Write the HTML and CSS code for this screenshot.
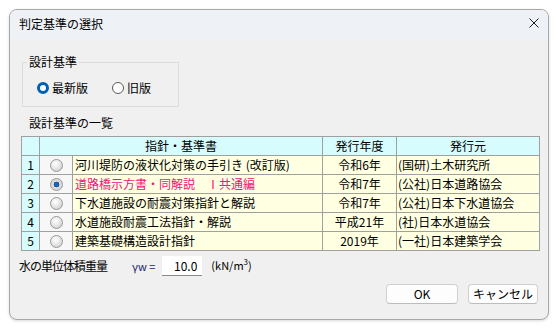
FILE: index.html
```html
<!DOCTYPE html>
<html lang="ja">
<head>
    <meta charset="UTF-8">
    <title>判定基準の選択</title>
    <link rel="stylesheet" href="styles.css">
</head>
<body>
    <div class="window">
        <div class="titlebar">
            <span class="title">判定基準の選択</span>
            <svg class="close" width="10" height="10" viewBox="0 0 10 10">
                <path d="M0.5 0.5 L9.5 9.5 M9.5 0.5 L0.5 9.5" stroke="#1a1a1a" stroke-width="1" fill="none"/>
            </svg>
        </div>
        <div class="content">
            <fieldset class="group">
                <legend>設計基準</legend>
                <div class="radio-row">
                    <label class="opt"><span class="w-radio checked"></span>最新版</label>
                    <label class="opt"><span class="w-radio"></span>旧版</label>
                </div>
            </fieldset>

            <div class="list-label">設計基準の一覧</div>

            <table class="grid">
                <colgroup>
                    <col class="c-no">
                    <col class="c-radio">
                    <col class="c-name">
                    <col class="c-year">
                    <col class="c-pub">
                </colgroup>
                <thead>
                    <tr>
                        <th></th>
                        <th colspan="2">指針・基準書</th>
                        <th>発行年度</th>
                        <th>発行元</th>
                    </tr>
                </thead>
                <tbody>
                    <tr>
                        <td class="no">1</td>
                        <td class="sel"><span class="c-rb"></span></td>
                        <td class="name">河川堤防の液状化対策の手引き (改訂版)</td>
                        <td class="year">令和6年</td>
                        <td class="pub">(国研)土木研究所</td>
                    </tr>
                    <tr class="active">
                        <td class="no">2</td>
                        <td class="sel"><span class="c-rb on"></span></td>
                        <td class="name">道路橋示方書・同解説　Ⅰ共通編</td>
                        <td class="year">令和7年</td>
                        <td class="pub">(公社)日本道路協会</td>
                    </tr>
                    <tr>
                        <td class="no">3</td>
                        <td class="sel"><span class="c-rb"></span></td>
                        <td class="name">下水道施設の耐震対策指針と解説</td>
                        <td class="year">令和7年</td>
                        <td class="pub">(公社)日本下水道協会</td>
                    </tr>
                    <tr>
                        <td class="no">4</td>
                        <td class="sel"><span class="c-rb"></span></td>
                        <td class="name">水道施設耐震工法指針・解説</td>
                        <td class="year">平成21年</td>
                        <td class="pub">(社)日本水道協会</td>
                    </tr>
                    <tr>
                        <td class="no">5</td>
                        <td class="sel"><span class="c-rb"></span></td>
                        <td class="name">建築基礎構造設計指針</td>
                        <td class="year">2019年</td>
                        <td class="pub">(一社)日本建築学会</td>
                    </tr>
                </tbody>
            </table>

            <div class="weight-row">
                <span class="weight-label">水の単位体積重量</span>
                <span class="gamma">γw =</span>
                <input class="num" type="text" value="10.0">
                <span class="unit">(kN/m<sup>3</sup>)</span>
            </div>

            <div class="buttons">
                <button class="btn">OK</button>
                <button class="btn">キャンセル</button>
            </div>
        </div>
    </div>
</body>
</html>
```

FILE: styles.css
```css
body {
    margin: 0;
    padding: 9px;
    background-color: #ffffff;
    font-family: "Noto Sans CJK JP", sans-serif;
    font-size: 12px;
    color: #000;
}
.window {
    width: 540px;
    box-sizing: border-box;
    border: 1px solid #a8a8a8;
    border-radius: 8px;
    background-color: #f0f0f0;
    overflow: hidden;
    box-shadow: 0 1px 3px rgba(0, 0, 0, 0.15);
}
.titlebar {
    height: 30px;
    background-color: #eef2f7;
    display: flex;
    align-items: center;
    justify-content: space-between;
    padding: 0 9px 0 9px;
}
.title {
    line-height: 14px;
    margin-top: -2px;
}
.close {
    margin-top: -4px;
}
.content {
    padding: 0 8px 15px 9px;
}
.group {
    width: 157px;
    box-sizing: border-box;
    margin: 15px 0 0 3px;
    padding: 11px 10px 10px 14px;
    border: 1px solid #dcdcdc;
}
.group legend {
    padding: 0 2px;
    margin-left: -10px;
    line-height: 14px;
}
.radio-row {
    display: flex;
    gap: 24px;
    line-height: 16px;
}
.opt {
    display: flex;
    align-items: center;
    gap: 3px;
}
.w-radio {
    width: 12px;
    height: 12px;
    box-sizing: border-box;
    border-radius: 50%;
    border: 1px solid #5a5a5a;
    background-color: #fff;
}
.w-radio.checked {
    border: 3.5px solid #005fb8;
    background-color: #fff;
}
.list-label {
    margin: 9px 0 0 10px;
    line-height: 14px;
}
.grid {
    margin: 6px 0 0 2px;
    width: 518px;
    border-collapse: collapse;
    table-layout: fixed;
    border: 1px solid #7a7a7a;
}
.c-no { width: 18px; }
.c-radio { width: 33px; }
.c-name { width: 250px; }
.c-year { width: 74px; }
.c-pub { width: 143px; }
.grid th, .grid td {
    height: 18px;
    padding: 0;
    line-height: 18px;
    border: 1px solid #a0a0a0;
    font-weight: normal;
    white-space: nowrap;
    overflow: hidden;
}
.grid th {
    background-color: #d6fcfd;
    text-align: center;
}
.grid td.no {
    background-color: #d6fcfd;
    text-align: center;
}
.grid td.sel {
    background-color: #f7f7f7;
    text-align: center;
}
.grid td.name, .grid td.year, .grid td.pub {
    background-color: #ffffe1;
}
.grid td.name {
    padding-left: 2px;
}
.grid td.year {
    text-align: center;
}
.grid td.pub {
    padding-left: 1px;
}
.grid tr.active td.name {
    color: #f0157f;
}
.c-rb {
    display: inline-block;
    vertical-align: middle;
    width: 13px;
    height: 13px;
    box-sizing: border-box;
    border-radius: 50%;
    border: 1px solid #9a9a9a;
    background: radial-gradient(circle at 40% 35%, #ffffff 0%, #e8e8e8 45%, #c4c4c4 100%);
    margin-top: -2px;
}
.c-rb.on {
    background: radial-gradient(circle at 50% 50%, #0d5fb0 0%, #1b6fc4 22%, #0a3f7a 34%, #e0e0e0 40%, #c8c8c8 100%);
}
.weight-row {
    display: flex;
    align-items: center;
    margin-top: 5px;
    height: 20px;
}
.weight-label {
    line-height: 14px;
    letter-spacing: -1px;
}
.gamma {
    margin-left: 25px;
    color: #1a1a6e;
    font-size: 11px;
}
.num {
    margin-left: 7px;
    width: 40px;
    height: 20px;
    box-sizing: border-box;
    border: none;
    border-bottom: 1px solid #8a8a8a;
    background-color: #fff;
    text-align: right;
    padding: 0 5px 0 0;
    font-family: "Noto Sans CJK JP", sans-serif;
    font-size: 12px;
    outline: none;
}
.unit {
    margin-left: 9px;
    font-size: 11px;
    margin-top: -4px;
}
.unit sup {
    font-size: 8px;
}
.buttons {
    display: flex;
    justify-content: flex-end;
    gap: 10px;
    margin-top: 8px;
    margin-right: 2px;
}
.btn {
    height: 20px;
    width: 70px;
    padding: 0;
    background-color: #fdfdfd;
    border: 1px solid #d0d0d0;
    border-bottom-color: #bcbcbc;
    border-radius: 4px;
    font-family: "Noto Sans CJK JP", sans-serif;
    font-size: 12px;
    line-height: 18px;
    color: #000;
}
.btn:first-child {
    width: 72px;
}
```
